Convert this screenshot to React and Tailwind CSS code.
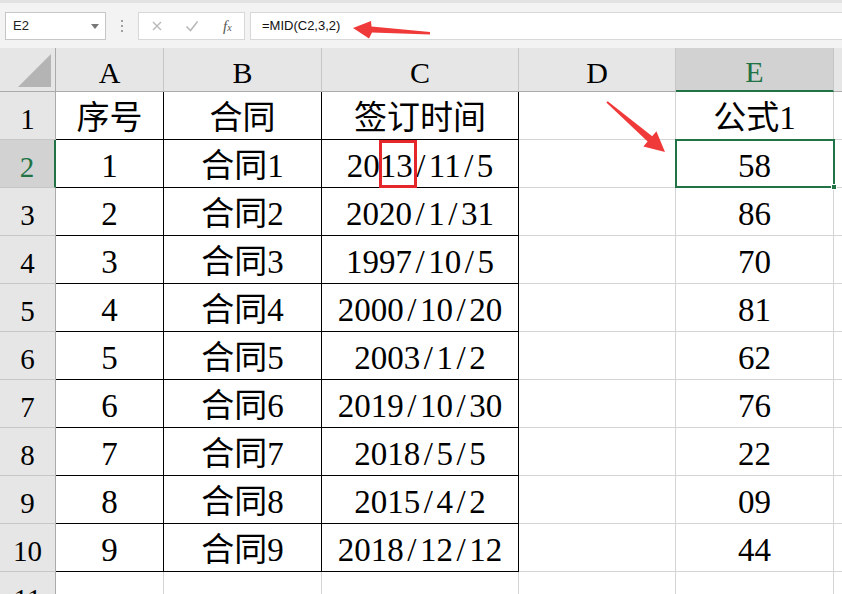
import React from 'react'

const rows = [
    ['序号', '合同', '签订时间', '', '公式1'],
    ['1', '合同1', '2013/11/5', '', '58'],
    ['2', '合同2', '2020/1/31', '', '86'],
    ['3', '合同3', '1997/10/5', '', '70'],
    ['4', '合同4', '2000/10/20', '', '81'],
    ['5', '合同5', '2003/1/2', '', '62'],
    ['6', '合同6', '2019/10/30', '', '76'],
    ['7', '合同7', '2018/5/5', '', '22'],
    ['8', '合同8', '2015/4/2', '', '09'],
    ['9', '合同9', '2018/12/12', '', '44'],
    ['', '', '', '', ''],
]

const cols = ['A', 'B', 'C', 'D', 'E']

const serif = { fontFamily: '"Liberation Serif", "Noto Sans CJK SC", serif' }

// slashes in the sheet font are as wide as a digit
const CellText = ({ text }) =>
    text.split('/').map((part, k) => (
        <React.Fragment key={k}>
            {k > 0 && <span className="mx-[3.5px]">/</span>}
            {part}
        </React.Fragment>
    ))

const App = () => {
    return (
        <div className="relative w-[842px] h-[594px] overflow-hidden bg-white select-none">
            {/* Formula bar */}
            <div className="h-[48px] bg-[#f3f3f3] border-t-[3px] border-[#e2e2e2]">
                <div className="flex items-stretch pt-[9px] h-[37px]">
                    <div
                        className="ml-[5px] w-[101px] bg-white border border-[#c6c6c6] flex items-center justify-between pl-[7px] pr-[6px] text-[13px] text-[#222]"
                        style={{ fontFamily: '"Liberation Sans", "Noto Sans", sans-serif' }}
                    >
                        <span>E2</span>
                        <svg width="8" height="5" viewBox="0 0 8 5"><path d="M0 0h8L4 5z" fill="#777" /></svg>
                    </div>
                    <div className="w-[32px] flex items-center justify-center">
                        <div className="flex flex-col gap-[3px]">
                            <span className="w-[2px] h-[2px] bg-[#a0a0a0]" />
                            <span className="w-[2px] h-[2px] bg-[#a0a0a0]" />
                            <span className="w-[2px] h-[2px] bg-[#a0a0a0]" />
                        </div>
                    </div>
                    <div className="w-[107px] bg-white border border-[#d8d8d8] flex items-center pl-[12px] gap-[22px]">
                        <svg width="12" height="12" viewBox="0 0 12 12"><path d="M2 2l8 8M10 2l-8 8" stroke="#b8b8b8" strokeWidth="1.4" /></svg>
                        <svg width="14" height="12" viewBox="0 0 14 12"><path d="M1.5 6.5l4 4 7-9" stroke="#b8b8b8" strokeWidth="1.5" fill="none" /></svg>
                        <span className="ml-[2px] text-[15px] italic text-[#555]" style={{ fontFamily: '"Liberation Serif", serif' }}>
                            f<span className="text-[10px]">x</span>
                        </span>
                    </div>
                    <div
                        className="ml-[5px] flex-1 bg-white border-y border-l border-[#d8d8d8] flex items-center pl-[11px] text-[13px] text-[#111]"
                        style={{ fontFamily: '"Liberation Sans", "Noto Sans", sans-serif' }}
                    >
                        =MID(C2,3,2)
                    </div>
                </div>
            </div>

            {/* Sheet grid */}
            <div className="grid grid-cols-[56px_108px_158px_197px_157px_158px_1fr] grid-rows-[44px_repeat(11,48px)]" style={serif}>
                {/* corner */}
                <div className="bg-[#e6e6e6] border-r border-b border-[#ababab] flex items-end justify-end pr-[4px] pb-[4px]">
                    <svg width="33" height="33" viewBox="0 0 33 33"><path d="M33 0V33H0z" fill="#b4b4b4" /></svg>
                </div>
                {cols.map((c) => (
                    <div
                        key={c}
                        className={
                            c === 'E'
                                ? 'bg-[#d2d2d2] border-r border-[#c6c6c6] border-b-2 border-b-[#217346] text-[#217346] flex items-center justify-center pt-[5px] text-[30px]'
                                : 'bg-[#e6e6e6] border-r border-[#c6c6c6] border-b border-b-[#ababab] text-black flex items-center justify-center pt-[5px] text-[30px]'
                        }
                    >
                        {c}
                    </div>
                ))}
                <div className="bg-[#e6e6e6] border-b border-[#ababab]" />

                {rows.map((r, i) => (
                    <React.Fragment key={i}>
                        <div
                            className={
                                i === 1
                                    ? 'bg-[#d2d2d2] border-b border-[#c6c6c6] border-r-2 border-r-[#217346] text-[#217346] flex items-center justify-center pt-[9px] text-[29px]'
                                    : 'bg-[#e6e6e6] border-b border-[#c6c6c6] border-r border-r-[#ababab] text-black flex items-center justify-center pt-[9px] text-[29px]'
                            }
                        >
                            {i + 1}
                        </div>
                        {r.map((v, j) => {
                            const framed = j < 3 && i < 10
                            return (
                                <div
                                    key={j}
                                    className={
                                        framed
                                            ? 'border-r border-b border-black flex items-center justify-center pt-[6px] text-[33px] text-black leading-none'
                                            : 'border-r border-b border-[#d4d4d4] flex items-center justify-center pt-[6px] text-[33px] text-black leading-none'
                                    }
                                >
                                    <CellText text={v} />
                                </div>
                            )
                        })}
                        <div className="border-b border-[#d4d4d4]" />
                    </React.Fragment>
                ))}
            </div>

            {/* selected cell E2 */}
            <div className="absolute left-[675px] top-[139px] w-[160px] h-[49px] border-2 border-[#217346]" />
            <div className="absolute left-[831px] top-[184px] w-[6px] h-[6px] bg-[#217346] border border-white" />

            {/* red highlight box around "13" */}
            <div className="absolute left-[379px] top-[140px] w-[38px] h-[48px] border-[3px] border-[#e5262b]" />

            {/* arrows */}
            <svg className="absolute left-0 top-0 pointer-events-none" width="842" height="594">
                <path d="M430 34.5 L372 32.5 L369 38.5 L353 28 L371 21 L371.5 26.5 L430 32 Z" fill="#f03a3a" />
                <path d="M606.3 102.6 L647.6 141.5 L643.4 146.5 L665 152 L656.4 131.3 L652.2 136.3 L607.7 101.2 Z" fill="#f03a3a" />
            </svg>
        </div>
    )
}

export default App
